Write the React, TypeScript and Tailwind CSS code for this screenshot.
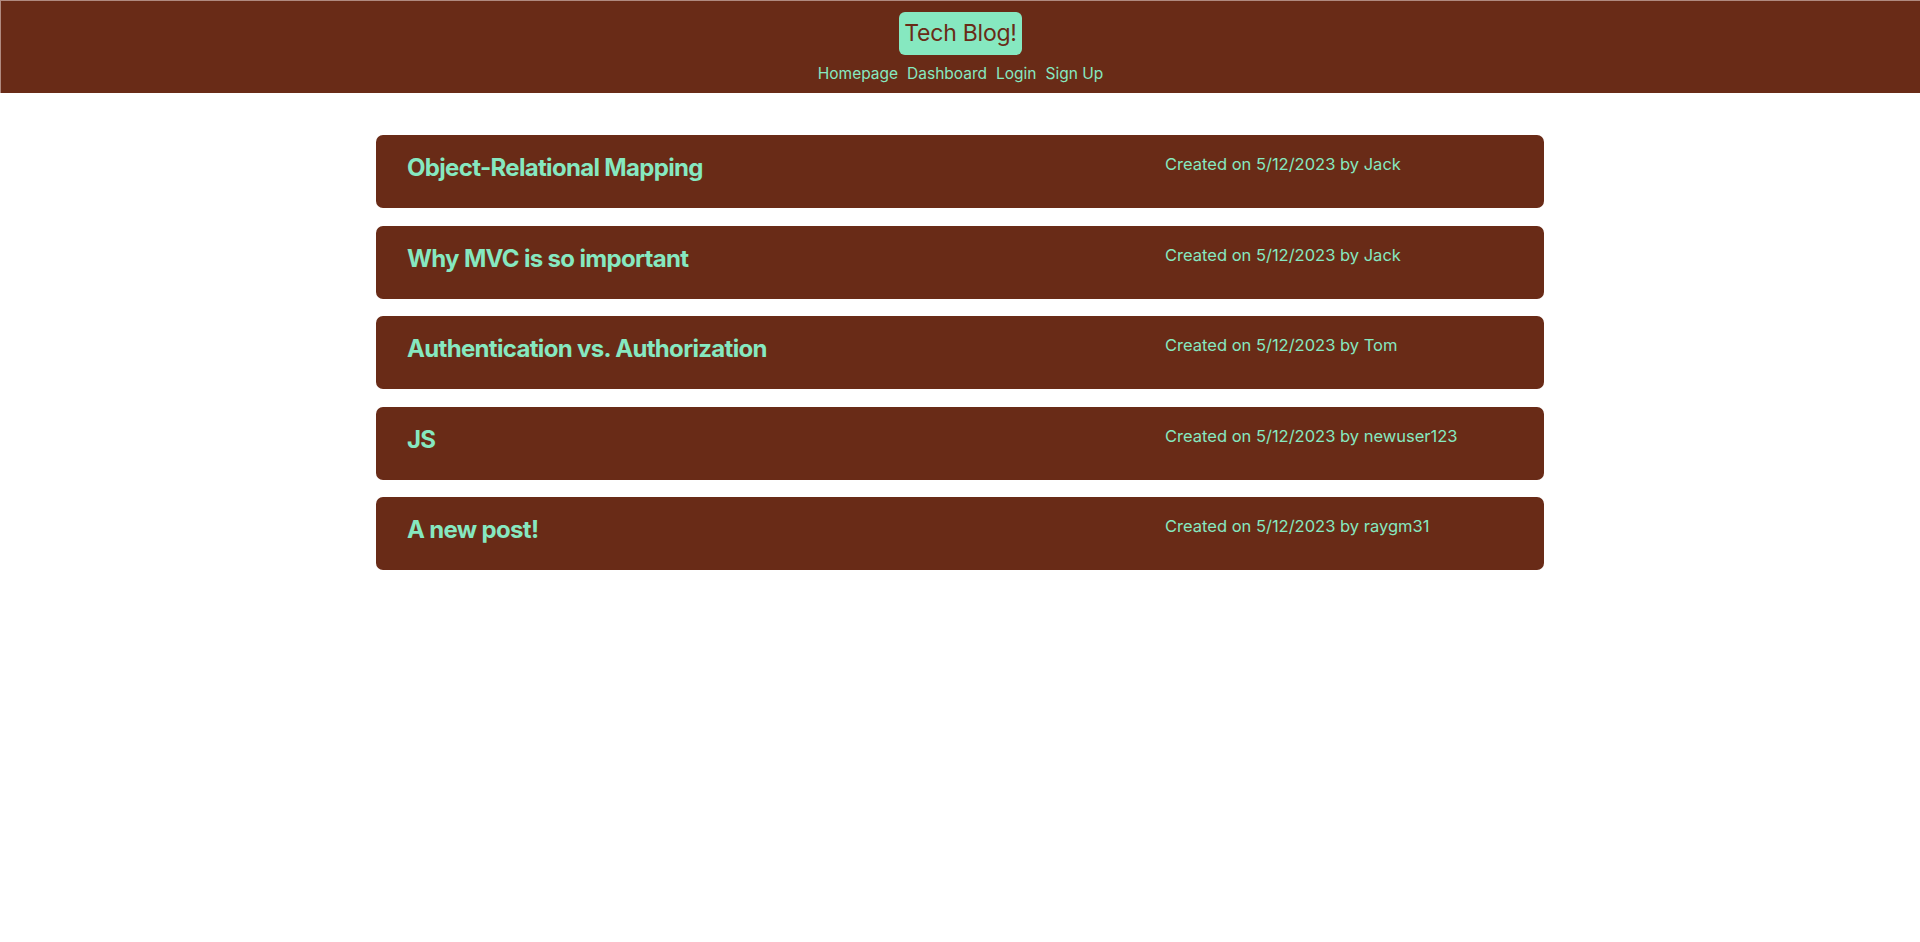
const posts = [
  { title: 'Object-Relational Mapping', date: '5/12/2023', author: 'Jack' },
  { title: 'Why MVC is so important', date: '5/12/2023', author: 'Jack' },
  { title: 'Authentication vs. Authorization', date: '5/12/2023', author: 'Tom' },
  { title: 'JS', date: '5/12/2023', author: 'newuser123' },
  { title: 'A new post!', date: '5/12/2023', author: 'raygm31' },
];

export default function App() {
  return (
    <div
      className="min-h-screen bg-white"
      style={{ fontFamily: 'Inter, "Noto Sans", sans-serif' }}
    >
      {/* Header */}
      <header className="bg-[#692b17] border-t border-l border-[#b08a80] flex flex-col items-center pt-[11px] pb-[7px]">
        <a className="bg-[#86e8c0] text-[#692b17] text-[23px] leading-[43px] h-[43px] px-[5px] rounded-[6px] tracking-[-0.01em]">
          Tech Blog!
        </a>
        <nav className="flex gap-[9px] mt-[7px] text-[15.5px] leading-[24px] text-[#86e8c0]">
          <a>Homepage</a>
          <a>Dashboard</a>
          <a>Login</a>
          <a>Sign Up</a>
        </nav>
      </header>

      {/* Posts */}
      <main className="w-[1168px] mx-auto mt-[42px] flex flex-col gap-[17.5px]">
        {posts.map((post) => (
          <div
            key={post.title}
            className="bg-[#692b17] rounded-[7px] h-[73px] flex px-[31px] pt-[15px]"
          >
            <h2 className="flex-1 text-[#86e8c0] text-[24px] font-bold leading-[36px] tracking-[-0.028em]">
              {post.title}
            </h2>
            <div className="w-[348px] text-[#86e8c0] text-[16.5px] leading-[27px] pt-[1px]">
              Created on {post.date} by {post.author}
            </div>
          </div>
        ))}
      </main>
    </div>
  );
}
